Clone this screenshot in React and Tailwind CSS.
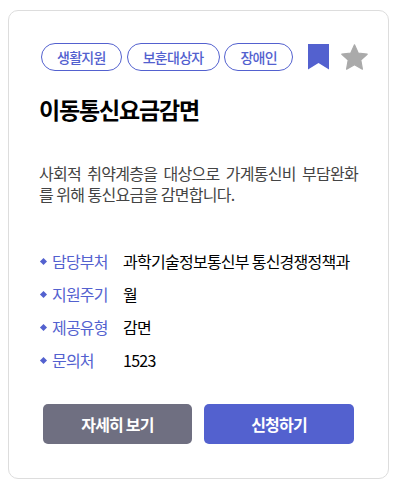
import React from 'react';

const tags = ['생활지원', '보훈대상자', '장애인'];

const details = [
  { label: '담당부처', value: '과학기술정보통신부 통신경쟁정책과' },
  { label: '지원주기', value: '월' },
  { label: '제공유형', value: '감면' },
  { label: '문의처', value: '1523' },
];

const BookmarkIcon = () => (
  <svg width="21" height="26" viewBox="0 0 21 26" fill="#5361cf" className="shrink-0">
    <path d="M0 0H21V25.5L10.5 19L0 25.5Z" />
  </svg>
);

const StarIcon = () => (
  <svg width="27" height="26" viewBox="0 0 27 26" fill="#aaaaaa" stroke="#aaaaaa" strokeWidth="1.2" strokeLinejoin="round" className="shrink-0">
    <path d="M13.5 0.8L17.2 9L26.2 10.2L19.8 16L21.4 25.2L13.5 20.8L5.6 25.2L7.2 16L0.8 10.2L9.8 9Z" />
  </svg>
);

const App = () => {
  return (
    <div className="h-[488px] w-[409px] bg-white pt-[10px] pl-2 font-['Noto_Sans_CJK_KR',sans-serif] tracking-[-0.05em]">
      <div className="flex h-[469px] w-[381px] flex-col rounded-[10px] border border-[#dddddd] bg-white pl-[30px]">
        <div className="mt-8 flex h-7 items-center pl-[2px]">
          <div className="flex gap-[4.9px]">
            {tags.map((tag) => (
              <span key={tag} className="flex h-7 items-center rounded-full border border-[#5361cf] px-[15px] text-sm font-medium tracking-[-0.05em] whitespace-nowrap text-[#5361cf]">
                {tag}
              </span>
            ))}
          </div>
          <div className="ml-[15px] flex items-center gap-3">
            <BookmarkIcon />
            <StarIcon />
          </div>
        </div>

        <h3 className="mt-[21px] h-[34px] text-[23px] leading-[34px] font-bold tracking-[-0.05em] text-black">
          이동통신요금감면
        </h3>

        <p className="mt-[37px] h-[42px] w-[319px] text-justify text-base leading-[21px] tracking-[-0.72px] [word-spacing:0.4px] break-all text-[#444444]">
          사회적 취약계층을 대상으로 가계통신비 부담완화를 위해 통신요금을 감면합니다.
        </p>

        <ul className="mt-11 flex flex-col gap-[9px]">
          {details.map(({ label, value }) => (
            <li key={label} className="flex h-6 items-center text-base leading-6 tracking-[-0.05em]">
              <span className="ml-[1.5px] size-[5px] rotate-45 bg-[#5361cf]"></span>
              <span className="ml-[6.5px] w-[71px] text-[#5361cf]">{label}</span>
              <span className="tracking-[-0.74px] whitespace-nowrap text-black">{value}</span>
            </li>
          ))}
        </ul>

        <div className="mt-8 flex gap-3 pl-1">
          <button className="h-10 w-[149px] rounded-[5px] bg-[#6f6f81] text-base font-bold tracking-[-0.05em] text-white">
            자세히 보기
          </button>
          <button className="h-10 w-[150px] rounded-[5px] bg-[#5361cf] text-base font-bold tracking-[-0.05em] text-white">
            신청하기
          </button>
        </div>
      </div>
    </div>
  );
};

export default App;
